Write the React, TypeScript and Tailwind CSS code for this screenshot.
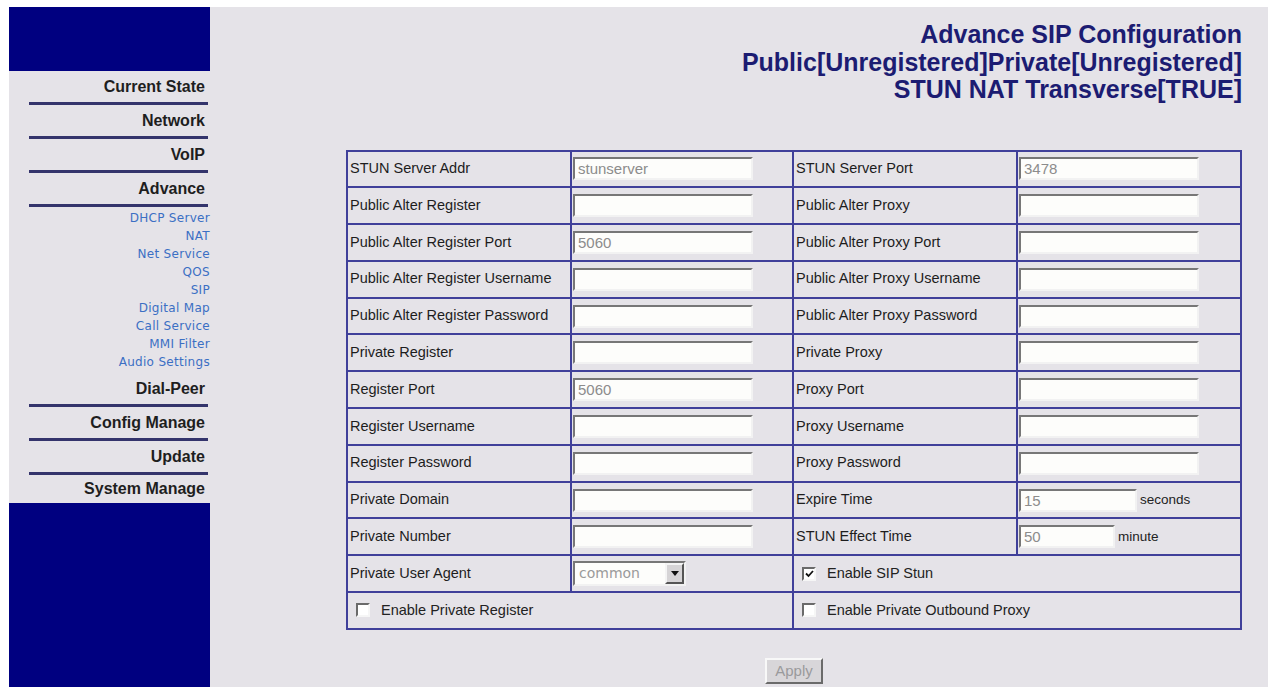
import React from "react";

type Cell =
    | { kind: "field"; label: string; value?: string; width?: string; unit?: string }
    | { kind: "select"; label: string; value: string }
    | { kind: "check"; label: string; checked?: boolean };

const rows: [Cell, Cell][] = [
    [
        { kind: "field", label: "STUN Server Addr", value: "stunserver" },
        { kind: "field", label: "STUN Server Port", value: "3478" },
    ],
    [
        { kind: "field", label: "Public Alter Register" },
        { kind: "field", label: "Public Alter Proxy" },
    ],
    [
        { kind: "field", label: "Public Alter Register Port", value: "5060" },
        { kind: "field", label: "Public Alter Proxy Port" },
    ],
    [
        { kind: "field", label: "Public Alter Register Username" },
        { kind: "field", label: "Public Alter Proxy Username" },
    ],
    [
        { kind: "field", label: "Public Alter Register Password" },
        { kind: "field", label: "Public Alter Proxy Password" },
    ],
    [
        { kind: "field", label: "Private Register" },
        { kind: "field", label: "Private Proxy" },
    ],
    [
        { kind: "field", label: "Register Port", value: "5060" },
        { kind: "field", label: "Proxy Port" },
    ],
    [
        { kind: "field", label: "Register Username" },
        { kind: "field", label: "Proxy Username" },
    ],
    [
        { kind: "field", label: "Register Password" },
        { kind: "field", label: "Proxy Password" },
    ],
    [
        { kind: "field", label: "Private Domain" },
        { kind: "field", label: "Expire Time", value: "15", width: "w-[118px]", unit: "seconds" },
    ],
    [
        { kind: "field", label: "Private Number" },
        { kind: "field", label: "STUN Effect Time", value: "50", width: "w-[96px]", unit: "minute" },
    ],
    [
        { kind: "select", label: "Private User Agent", value: "common" },
        { kind: "check", label: "Enable SIP Stun", checked: true },
    ],
    [
        { kind: "check", label: "Enable Private Register" },
        { kind: "check", label: "Enable Private Outbound Proxy" },
    ],
];

const mainMenu = ["Current State", "Network", "VoIP", "Advance"];
const subMenu = [
    "DHCP Server",
    "NAT",
    "Net Service",
    "QOS",
    "SIP",
    "Digital Map",
    "Call Service",
    "MMI Filter",
    "Audio Settings",
];
const lowerMenu = ["Dial-Peer", "Config Manage", "Update"];

export default function App() {
    return (
        <div className="flex h-screen flex-col overflow-hidden bg-white pl-[9px] pt-[7px] font-['Liberation_Sans',Arial,sans-serif]">
            <div className="flex flex-1 bg-[#e5e3e8]">
                <Sidebar />

                <main className="flex-1 pr-[26px]">
                    <div className="pt-[14px] text-right text-[25px] font-bold leading-[27.5px] text-[#1c1c72]">
                        <div>Advance SIP Configuration</div>
                        <div>Public[Unregistered]Private[Unregistered]</div>
                        <div>STUN NAT Transverse[TRUE]</div>
                    </div>

                    <div className="ml-[136px] mt-[46px]">
                        <table className="w-[894px] table-fixed border-collapse border-2 border-[#40409a]">
                            <colgroup>
                                <col className="w-[224px]" />
                                <col className="w-[222px]" />
                                <col className="w-[224px]" />
                                <col className="w-[224px]" />
                            </colgroup>
                            <tbody>
                                {rows.map((row, i) => (
                                    <tr key={i}>
                                        {row.map((cell, j) => (
                                            <ConfigCell key={j} cell={cell} />
                                        ))}
                                    </tr>
                                ))}
                            </tbody>
                        </table>

                        <div className="mt-[28px] flex justify-center">
                            <button className="h-[26px] w-[58px] border-2 border-t-[#f8f8f8] border-l-[#f8f8f8] border-r-[#6a6a6a] border-b-[#6a6a6a] bg-[#d8d6d9] text-[15px] text-[#9a9a9c]">
                                Apply
                            </button>
                        </div>
                    </div>
                </main>
            </div>
        </div>
    );
}

function Sidebar() {
    return (
        <aside className="flex w-[203px] flex-col">
            <div className="h-[64px] bg-[#000080]" />

            {mainMenu.map((item) => (
                <MenuItem key={item} label={item} />
            ))}

            <div className="pt-[2px] font-['DejaVu_Sans',Verdana,sans-serif] text-[12px] tracking-[0.3px] text-[#3b6fc4]">
                {subMenu.map((item) => (
                    <div key={item} className="h-[18px] text-right leading-[18px] whitespace-nowrap">
                        {item}
                    </div>
                ))}
            </div>

            <div className="h-[2px]" />
            {lowerMenu.map((item) => (
                <MenuItem key={item} label={item} />
            ))}

            <div className="flex h-[28px] items-center justify-end pr-[5px] text-[16px] font-bold text-[#1e1e1e]">
                System Manage
            </div>
            <div className="flex-1 bg-[#000080]" />
        </aside>
    );
}

function MenuItem({ label }: { label: string }) {
    return (
        <div>
            <div className="flex h-[31px] items-center justify-end pr-[5px] text-[16px] font-bold text-[#1e1e1e]">
                {label}
            </div>
            <div className="ml-[20px] mr-[2px] h-[3px] bg-[#34346c]" />
        </div>
    );
}

function ConfigCell({ cell }: { cell: Cell }) {
    const td = "h-[36.8px] border-2 border-[#40409a] p-0 align-middle";

    if (cell.kind === "check") {
        return (
            <td colSpan={2} className={td}>
                <div className="flex items-center gap-[11px] pl-[8px] text-[14.5px] text-[#222]">
                    <CheckBox checked={cell.checked} />
                    {cell.label}
                </div>
            </td>
        );
    }

    return (
        <>
            <td className={td}>
                <div className="pl-[2px] text-[14.5px] whitespace-nowrap text-[#1d1d1d]">{cell.label}</div>
            </td>
            <td className={td}>
                {cell.kind === "select" ? (
                    <div className="pl-[1px]">
                        <SelectBox value={cell.value} />
                    </div>
                ) : (
                    <div className="flex items-center pl-[1px]">
                        <input
                            defaultValue={cell.value ?? ""}
                            className={`h-[23px] ${cell.width ?? "w-[180px]"} border-2 border-t-[#777] border-l-[#777] border-r-[#f2f2f2] border-b-[#f2f2f2] bg-[#fdfdfb] px-[3px] text-[15px] text-[#8c8c8c] outline-none`}
                        />
                        {cell.unit && (
                            <span className="ml-[3px] text-[13.5px] text-[#222]">{cell.unit}</span>
                        )}
                    </div>
                )}
            </td>
        </>
    );
}

function SelectBox({ value }: { value: string }) {
    return (
        <div className="flex h-[25px] w-[113px] border-2 border-t-[#777] border-l-[#777] border-r-[#f2f2f2] border-b-[#f2f2f2] bg-[#fdfdfb]">
            <span className="flex-1 pl-[4px] font-['DejaVu_Sans',Verdana,sans-serif] text-[14px] leading-[21px] text-[#9a9a9a]">
                {value}
            </span>
            <span className="flex w-[19px] items-center justify-center border-2 border-t-[#f4f4f4] border-l-[#f4f4f4] border-r-[#555] border-b-[#555] bg-[#d6d4d6]">
                <svg width="8" height="5" viewBox="0 0 8 5">
                    <path d="M0 0 L8 0 L4 5 Z" fill="#111" />
                </svg>
            </span>
        </div>
    );
}

function CheckBox({ checked }: { checked?: boolean }) {
    return (
        <span className="flex h-[14px] w-[14px] shrink-0 items-center justify-center border-2 border-t-[#6a6a6a] border-l-[#6a6a6a] border-r-[#f6f6f6] border-b-[#f6f6f6] bg-white">
            {checked && (
                <svg width="9" height="8" viewBox="0 0 9 8">
                    <path d="M1 3.5 L3.5 6 L8 1" fill="none" stroke="#111" strokeWidth="1.8" />
                </svg>
            )}
        </span>
    );
}
